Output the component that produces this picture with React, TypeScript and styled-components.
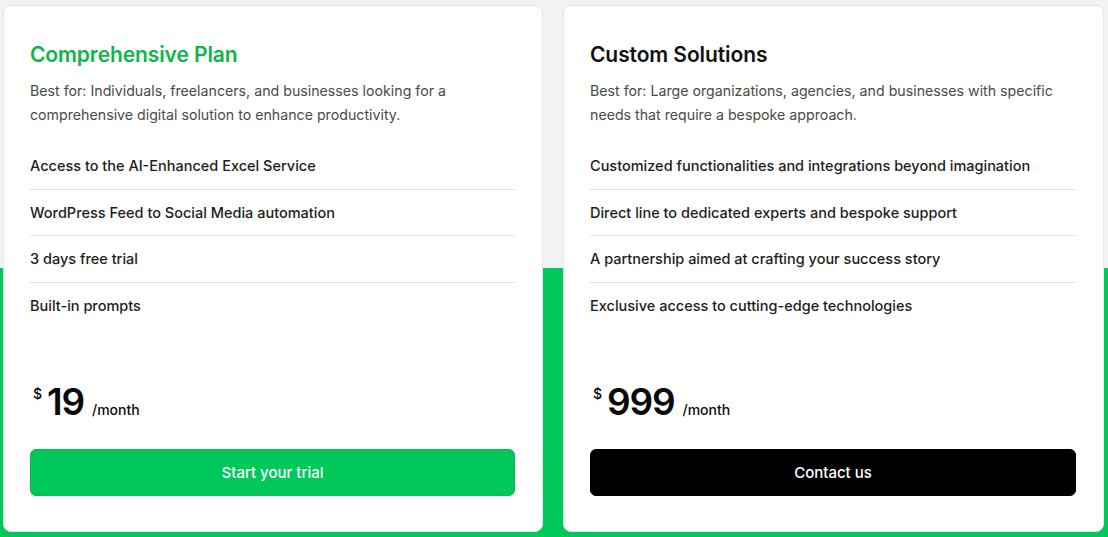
import React from "react";
import styled, { createGlobalStyle } from "styled-components";

const GlobalStyle = createGlobalStyle`
  html, body { margin: 0; padding: 0; }
  body {
    font-family: Inter, "Noto Sans", "Liberation Sans", sans-serif;
    background: #00c85a;
    -webkit-font-smoothing: antialiased;
  }
  * { box-sizing: border-box; }
`;

const Page = styled.div`
  width: 1108px;
  height: 537px;
  background: linear-gradient(to bottom, #f2f2f2 0, #f2f2f2 268px, #00c85a 268px, #00c85a 100%);
  padding: 5px 4px 5px 3px;
  display: grid;
  grid-template-columns: 540px 541px;
  column-gap: 20px;
`;

const Card = styled.div`
  background: #ffffff;
  border: 1px solid #e6e6e6;
  border-radius: 8px;
  padding: 35px 27px 35px 26px;
  display: flex;
  flex-direction: column;
`;

const Title = styled.h2<{ $accent?: boolean }>`
  margin: 0;
  font-size: 21px;
  line-height: 28px;
  font-weight: 600;
  letter-spacing: -0.1px;
  color: ${(p) => (p.$accent ? "#0db54a" : "#111111")};
`;

const Desc = styled.p`
  margin: 10px 0 0;
  font-size: 14.2px;
  line-height: 24px;
  color: #4a4a4a;
  font-weight: 400;
`;

const List = styled.ul`
  list-style: none;
  margin: 16px 0 0;
  padding: 0;
`;

const Item = styled.li`
  font-size: 14.5px;
  line-height: 22px;
  font-weight: 500;
  color: #1c1c1c;
  padding: 12px 0 11.5px;
  border-bottom: 1px solid #e4e4e4;
  &:last-child { border-bottom: none; }
`;

const PriceRow = styled.div`
  margin-top: auto;
  display: flex;
  align-items: baseline;
  color: #0a0a0a;
  padding-left: 3px;
`;

const Currency = styled.span`
  font-size: 14px;
  font-weight: 500;
  align-self: flex-start;
  margin-top: 3px;
  margin-right: 5px;
`;

const Amount = styled.span`
  font-size: 37px;
  line-height: 40px;
  font-weight: 600;
  letter-spacing: -1.2px;
`;

const Period = styled.span`
  font-size: 14px;
  font-weight: 500;
  margin-left: 8px;
`;

const Button = styled.button<{ $variant: "green" | "black" }>`
  margin-top: 27px;
  height: 47px;
  width: 100%;
  border-radius: 6px;
  border: 1px solid ${(p) => (p.$variant === "green" ? "#10b852" : "#000")};
  background: ${(p) => (p.$variant === "green" ? "#00c85a" : "#000000")};
  color: #ffffff;
  font-family: inherit;
  font-size: 15px;
  font-weight: 500;
  cursor: pointer;
`;

type Plan = {
  title: string;
  accent?: boolean;
  desc: string;
  features: string[];
  price: string;
  cta: string;
  variant: "green" | "black";
};

const plans: Plan[] = [
  {
    title: "Comprehensive Plan",
    accent: true,
    desc:
      "Best for: Individuals, freelancers, and businesses looking for a comprehensive digital solution to enhance productivity.",
    features: [
      "Access to the AI-Enhanced Excel Service",
      "WordPress Feed to Social Media automation",
      "3 days free trial",
      "Built-in prompts",
    ],
    price: "19",
    cta: "Start your trial",
    variant: "green",
  },
  {
    title: "Custom Solutions",
    desc:
      "Best for: Large organizations, agencies, and businesses with specific needs that require a bespoke approach.",
    features: [
      "Customized functionalities and integrations beyond imagination",
      "Direct line to dedicated experts and bespoke support",
      "A partnership aimed at crafting your success story",
      "Exclusive access to cutting-edge technologies",
    ],
    price: "999",
    cta: "Contact us",
    variant: "black",
  },
];

export default function App() {
  return (
    <>
      <GlobalStyle />
      <Page>
        {plans.map((p) => (
          <Card key={p.title}>
            <Title $accent={p.accent}>{p.title}</Title>
            <Desc>{p.desc}</Desc>
            <List>
              {p.features.map((f) => (
                <Item key={f}>{f}</Item>
              ))}
            </List>
            <PriceRow>
              <Currency>$</Currency>
              <Amount>{p.price}</Amount>
              <Period>/month</Period>
            </PriceRow>
            <Button $variant={p.variant}>{p.cta}</Button>
          </Card>
        ))}
      </Page>
    </>
  );
}
